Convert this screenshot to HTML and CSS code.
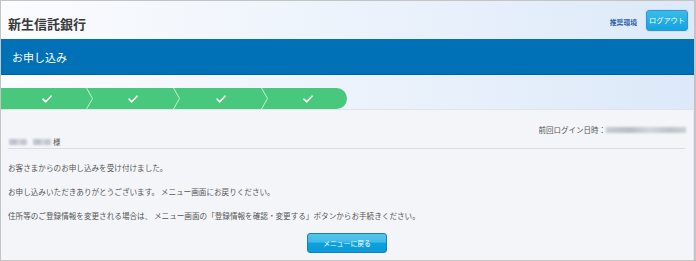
FILE: index.html
```html
<!DOCTYPE html>
<html lang="ja">
<head>
<meta charset="utf-8">
<title>お申し込み</title>
<link rel="stylesheet" href="styles.css">
</head>
<body>
<div class="frame">
  <header class="header">
    <h1 class="brand">新生信託銀行</h1>
    <div class="header-tools">
      <a class="env-link">推奨環境</a>
      <button class="logout">ログアウト</button>
    </div>
  </header>
  <div class="page-title">お申し込み</div>
  <div class="steps-wrap">
    <div class="steps">
      <div class="step step-first"><svg class="check" viewBox="0 0 10 8"><path d="M1 4.2 L3.8 6.8 L9 1.2" /></svg></div>
      <svg class="sep" viewBox="0 0 7 21"><path d="M0.5 0 L6.5 10.5 L0.5 21" /></svg>
      <div class="step"><svg class="check" viewBox="0 0 10 8"><path d="M1 4.2 L3.8 6.8 L9 1.2" /></svg></div>
      <svg class="sep" viewBox="0 0 7 21"><path d="M0.5 0 L6.5 10.5 L0.5 21" /></svg>
      <div class="step step-third"><svg class="check" viewBox="0 0 10 8"><path d="M1 4.2 L3.8 6.8 L9 1.2" /></svg></div>
      <svg class="sep" viewBox="0 0 7 21"><path d="M0.5 0 L6.5 10.5 L0.5 21" /></svg>
      <div class="step step-last"><svg class="check" viewBox="0 0 10 8"><path d="M1 4.2 L3.8 6.8 L9 1.2" /></svg></div>
    </div>
  </div>
  <main class="panel">
    <div class="last-login">前回ログイン日時：<span class="blur blur-date"></span></div>
    <div class="customer"><span class="blur blur-a"></span><span class="blur blur-b"></span>様</div>
    <p class="msg">お客さまからのお申し込みを受け付けました。</p>
    <p class="msg">お申し込みいただきありがとうございます。 メニュー画面にお戻りください。</p>
    <p class="msg">住所等のご登録情報を変更される場合は、 メニュー画面の「登録情報を確認・変更する」ボタンからお手続きください。</p>
    <div class="actions"><button class="btn-menu">メニューに戻る</button></div>
  </main>
</div>
</body>
</html>
```
FILE: styles.css
```css
* { box-sizing: border-box; }
html, body { margin: 0; padding: 0; }
body {
  font-family: "Noto Sans CJK JP", "Noto Sans", sans-serif;
  background: #ffffff;
}
.frame {
  width: 696px;
  height: 261px;
  border: 1px solid #c4c4c4;
  border-right-width: 2px;
  display: flex;
  flex-direction: column;
  background: linear-gradient(90deg, #fbfcfe 0%, #eef4fc 45%, #dde9f9 100%);
  overflow: hidden;
}
.header {
  height: 38px;
  display: flex;
  align-items: center;
  justify-content: space-between;
  padding: 0 6px 0 7px;
}
.brand {
  margin: 0;
  font-size: 13px;
  font-weight: bold;
  color: #3a3a3a;
  line-height: 16px;
  margin-top: 7px;
}
.header-tools {
  display: flex;
  align-items: center;
  gap: 9px;
}
.env-link {
  font-size: 6.8px;
  font-weight: bold;
  color: #2b5fae;
  margin-top: 3px;
}
.logout {
  width: 42px;
  height: 21px;
  padding: 0;
  border: 1px solid #3c8fd0;
  border-radius: 3px;
  background: linear-gradient(#38bdea, #13a3df);
  color: #ffffff;
  font-family: inherit;
  font-size: 7.2px;
  box-shadow: 0 0 0 1px #cfe3f6;
}
.page-title {
  height: 36px;
  background: #0071b7;
  border-bottom: 1px solid #00609f;
  color: #ffffff;
  font-size: 11px;
  display: flex;
  align-items: center;
  padding-left: 11px;
}
.steps-wrap {
  padding-top: 13px;
  height: 34px;
}
.steps {
  width: 346px;
  height: 21px;
  display: flex;
  background: #48c87c;
  border-radius: 0 11px 11px 0;
}
.step {
  flex: none;
  width: 80px;
  display: flex;
  align-items: center;
  justify-content: center;
}
.step-first { width: 85px; padding-left: 7px; }
.step-third { width: 81px; }
.step-last { width: 79px; }
.check {
  width: 10px;
  height: 8px;
  fill: none;
  stroke: #ffffff;
  stroke-width: 1.6;
  stroke-linecap: round;
  stroke-linejoin: round;
}
.sep {
  width: 7px;
  height: 21px;
  flex: none;
  fill: none;
  stroke: #c6efd5;
  stroke-width: 1;
}
.panel {
  flex: 1;
  background: #f4f5f9;
  border-top: 1px solid #dfe4ec;
  margin-right: 1px;
  padding: 13px 7px 5px 7px;
  color: #555555;
}
.last-login {
  text-align: right;
  font-size: 7.5px;
  line-height: 13px;
  display: flex;
  justify-content: flex-end;
  align-items: center;
}
.blur {
  display: inline-block;
  height: 6px;
  background: linear-gradient(90deg, #c9ccd3, #b9bdc6 30%, #d3d6dc 55%, #bfc3cb 80%, #cdd0d6);
  filter: blur(0.8px);
}
.blur-date { width: 80px; }
.blur-a { width: 18px; margin-right: 6px; }
.blur-b { width: 18px; margin-right: 2px; }
.customer {
  font-size: 7.5px;
  line-height: 12px;
  display: flex;
  align-items: center;
  padding-left: 1px;
  border-bottom: 1px solid #d8dce4;
  margin-right: 1px;
}
.msg {
  margin: 12px 0 0 0;
  font-size: 7.6px;
  line-height: 14px;
  white-space: nowrap;
}
.msg + .msg { margin-top: 10px; }
.actions {
  display: flex;
  justify-content: center;
  margin-top: 10px;
}
.btn-menu {
  width: 80px;
  height: 20px;
  padding: 0;
  border: 1px solid #1b7cc0;
  border-radius: 3px;
  background: linear-gradient(#55c6ec 0%, #3fbae8 45%, #0da0dc 50%, #0a9bd8 100%);
  color: #ffffff;
  font-family: inherit;
  font-size: 6.8px;
}
```
